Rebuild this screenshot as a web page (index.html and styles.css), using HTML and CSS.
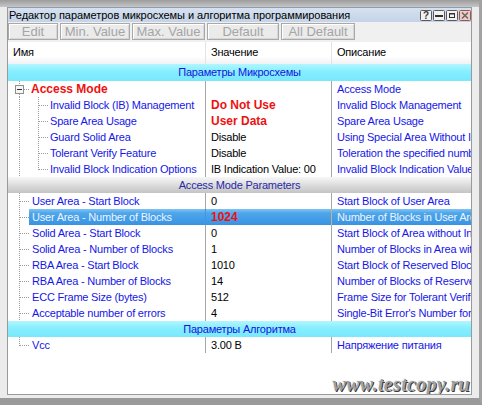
FILE: index.html
```html
<!DOCTYPE html>
<html>
<head>
<meta charset="utf-8">
<link rel="stylesheet" href="styles.css">
</head>
<body>
<div class="screen">
  <div class="topband"></div>
  <div class="mid">
    <div class="win">
      <div class="titlebar">
        <span class="title">Редактор параметров микросхемы и алгоритма программирования</span>
        <div class="tbtns">
          <svg width="12" height="11" viewBox="0 0 12 11"><rect x="0.5" y="0.5" width="11" height="10" rx="1" fill="#f2f2f2" stroke="#5a5a5a"/><text x="6" y="9" font-size="10" font-weight="bold" text-anchor="middle" fill="#3a3a3a" font-family="Liberation Sans, sans-serif">?</text></svg>
          <svg width="12" height="11" viewBox="0 0 12 11"><rect x="0.5" y="0.5" width="11" height="10" rx="1" fill="#f2f2f2" stroke="#5a5a5a"/><rect x="2" y="5" width="8" height="2" fill="#333"/></svg>
          <svg width="12" height="11" viewBox="0 0 12 11"><rect x="0.5" y="0.5" width="11" height="10" rx="1" fill="#f2f2f2" stroke="#5a5a5a"/><rect x="3.5" y="3.5" width="5" height="4" fill="none" stroke="#333"/><rect x="3" y="3" width="6" height="1.5" fill="#333"/></svg>
          <svg width="12" height="11" viewBox="0 0 12 11"><rect x="0.5" y="0.5" width="11" height="10" rx="1" fill="#ecd0c8" stroke="#a0524a"/><path d="M3 2.5L9 8.5M9 2.5L3 8.5" stroke="#6a6a6a" stroke-width="1.6"/></svg>
        </div>
      </div>
      <div class="toolbar">
        <button class="tb b-edit">Edit</button>
        <button class="tb b-min">Min. Value</button>
        <button class="tb b-max">Max. Value</button>
        <button class="tb b-def">Default</button>
        <button class="tb b-all">All Default</button>
      </div>
      <div class="list">
        <div class="hdr">
          <div class="h1">Имя</div>
          <div class="h2">Значение</div>
          <div class="h3">Описание</div>
        </div>
        <div class="grp cyan first">Параметры Микросхемы</div>

        <div class="row">
          <div class="c1"><svg class="tr" width="21" height="16"><path d="M11.5 0V4M11.5 13V16M16 8.5H21"/><rect class="box" x="7.5" y="4.5" width="8" height="8"/><path class="minus" d="M9 8.5H14"/></svg><span class="lbl am">Access Mode</span></div>
          <div class="c2"></div>
          <div class="c3">Access Mode</div>
        </div>

        <div class="row">
          <div class="c1"><svg class="tr" width="40" height="16"><path d="M11.5 0V16M30.5 0V16M31 8.5H40"/></svg><span class="lbl l2">Invalid Block (IB) Management</span></div>
          <div class="c2 red">Do Not Use</div>
          <div class="c3">Invalid Block Management</div>
        </div>
        <div class="row">
          <div class="c1"><svg class="tr" width="40" height="16"><path d="M11.5 0V16M30.5 0V16M31 8.5H40"/></svg><span class="lbl l2">Spare Area Usage</span></div>
          <div class="c2 red">User Data</div>
          <div class="c3">Spare Area Usage</div>
        </div>
        <div class="row">
          <div class="c1"><svg class="tr" width="40" height="16"><path d="M11.5 0V16M30.5 0V16M31 8.5H40"/></svg><span class="lbl l2">Guard Solid Area</span></div>
          <div class="c2">Disable</div>
          <div class="c3">Using Special Area Without Invalid Blocks</div>
        </div>
        <div class="row">
          <div class="c1"><svg class="tr" width="40" height="16"><path d="M11.5 0V16M30.5 0V16M31 8.5H40"/></svg><span class="lbl l2">Tolerant Verify Feature</span></div>
          <div class="c2">Disable</div>
          <div class="c3">Toleration the specified number of errors</div>
        </div>
        <div class="row">
          <div class="c1"><svg class="tr" width="40" height="16"><path d="M11.5 0V16M30.5 0V9M31 8.5H40"/></svg><span class="lbl l2">Invalid Block Indication Options</span></div>
          <div class="c2">IB Indication Value: 00</div>
          <div class="c3">Invalid Block Indication Value</div>
        </div>

        <div class="grp gray">Access Mode Parameters</div>

        <div class="row">
          <div class="c1"><svg class="tr" width="21" height="16"><path d="M11.5 0V16M12 8.5H21"/></svg><span class="lbl l1">User Area - Start Block</span></div>
          <div class="c2">0</div>
          <div class="c3">Start Block of User Area</div>
        </div>
        <div class="row sel">
          <div class="c1"><svg class="tr" width="21" height="16"><path d="M11.5 0V16M12 8.5H21"/></svg><span class="lbl l1">User Area - Number of Blocks</span></div>
          <div class="c2 red">1024</div>
          <div class="c3">Number of Blocks in User Area</div>
        </div>
        <div class="row">
          <div class="c1"><svg class="tr" width="21" height="16"><path d="M11.5 0V16M12 8.5H21"/></svg><span class="lbl l1">Solid Area - Start Block</span></div>
          <div class="c2">0</div>
          <div class="c3">Start Block of Area without Invalid Blocks</div>
        </div>
        <div class="row">
          <div class="c1"><svg class="tr" width="21" height="16"><path d="M11.5 0V16M12 8.5H21"/></svg><span class="lbl l1">Solid Area - Number of Blocks</span></div>
          <div class="c2">1</div>
          <div class="c3">Number of Blocks in Area without Invalid Blocks</div>
        </div>
        <div class="row">
          <div class="c1"><svg class="tr" width="21" height="16"><path d="M11.5 0V16M12 8.5H21"/></svg><span class="lbl l1">RBA Area - Start Block</span></div>
          <div class="c2">1010</div>
          <div class="c3">Start Block of Reserved Block Area</div>
        </div>
        <div class="row">
          <div class="c1"><svg class="tr" width="21" height="16"><path d="M11.5 0V16M12 8.5H21"/></svg><span class="lbl l1">RBA Area - Number of Blocks</span></div>
          <div class="c2">14</div>
          <div class="c3">Number of Blocks of Reserved Block Area</div>
        </div>
        <div class="row">
          <div class="c1"><svg class="tr" width="21" height="16"><path d="M11.5 0V16M12 8.5H21"/></svg><span class="lbl l1">ECC Frame Size (bytes)</span></div>
          <div class="c2">512</div>
          <div class="c3">Frame Size for Tolerant Verification</div>
        </div>
        <div class="row">
          <div class="c1"><svg class="tr" width="21" height="16"><path d="M11.5 0V16M12 8.5H21"/></svg><span class="lbl l1">Acceptable number of errors</span></div>
          <div class="c2">4</div>
          <div class="c3">Single-Bit Error's Number for Tolerant Verification</div>
        </div>

        <div class="grp cyan">Параметры Алгоритма</div>

        <div class="row">
          <div class="c1"><svg class="tr" width="21" height="16"><path d="M11.5 0V9M12 8.5H21"/></svg><span class="lbl l1">Vcc</span></div>
          <div class="c2">3.00 В</div>
          <div class="c3">Напряжение питания</div>
        </div>

        <div class="fill"></div>
        <div class="wm">www.testcopy.ru</div>
      </div>
    </div>
  </div>
</div>
</body>
</html>
```

FILE: styles.css
```css
* { box-sizing: border-box; }
body { margin: 0; font-family: "Liberation Sans", Arial, sans-serif; }

.screen {
  width: 482px; height: 405px;
  background: #ececec;
  border-right: 3px solid #a2a2a2;
  border-bottom: 7px solid #9a9a9a;
  display: flex; flex-direction: column;
  overflow: hidden;
}
.topband { flex: none; height: 7px; background: linear-gradient(#9c9c9c, #c6c6c6); }
.mid { flex: 1; display: flex; padding: 0 7px 3px 7px; }

.win {
  width: 465px; height: 388px;
  border: 1px solid #9a9a9a;
  border-top-color: #8e9bb0;
  display: flex; flex-direction: column;
  background: #fff;
}

.titlebar {
  flex: none; height: 14px;
  display: flex; align-items: center; justify-content: space-between;
  background: linear-gradient(#d6e1ef, #c4d3e7);
  padding-left: 1px;
}
.title { font-size: 11px; line-height: 14px; color: #000; white-space: nowrap; letter-spacing: -0.05px; }
.tbtns { display: flex; gap: 1px; align-items: center; height: 11px; }
.tbtns svg { display: block; }

.toolbar {
  flex: none; height: 20px;
  background: #f0f0f0;
  display: flex; gap: 2px;
  padding-top: 1px;
}
.tb {
  height: 17px; padding: 0; margin: 0;
  font-family: "Liberation Sans", Arial, sans-serif;
  font-size: 13px; line-height: 15px;
  color: #a5a5a5;
  background: #ebebeb;
  border: 1px solid #a9a9a9;
  box-shadow: inset 1px 1px 0 #fff, inset -1px -1px 0 #d6d6d6;
  text-align: center;
}
.b-edit { width: 50px; }
.b-min { width: 70px; }
.b-max { width: 73px; }
.b-def { width: 72px; }
.b-all { width: 74px; }

.list {
  flex: 1; position: relative;
  display: flex; flex-direction: column;
  font-size: 11px; letter-spacing: -0.2px;
  overflow: hidden;
}
.hdr {
  flex: none; height: 22px;
  display: grid; grid-template-columns: 198px 126px 1fr;
  background: linear-gradient(#ffffff 0, #ffffff 65%, #f1f2f4 100%);
  line-height: 21px; color: #000;
}
.h1, .h2 { border-right: 1px solid #e3e3e3; }
.h1 { padding-left: 5px; }
.h2, .h3 { padding-left: 5px; }

.grp {
  flex: none; height: 16px; line-height: 16px;
  text-align: center; white-space: nowrap;
}
.grp.first { height: 17px; line-height: 17px; }
.cyan { background: linear-gradient(#b2f6ff, #86eeff 45%, #78e8fc); color: #1414e0; }
.gray { background: linear-gradient(#f7f7f7, #dadada 55%, #c4c4c4); color: #2a2aa8; }

.row {
  flex: none; height: 16px; line-height: 16px;
  display: grid; grid-template-columns: 198px 126px 1fr;
  white-space: nowrap;
}
.c1 { display: flex; border-right: 1px solid #a7a7a7; overflow: hidden; color: #1616e8; }
.c2 { padding-left: 5px; border-right: 1px solid #a7a7a7; overflow: hidden; color: #000; }
.c3 { padding-left: 5px; overflow: hidden; color: #1616e8; }

.tr { display: block; flex: none; }
.tr path { fill: none; stroke: #9c9c9c; stroke-width: 1; stroke-dasharray: 1 1; shape-rendering: crispEdges; }
.tr .box { fill: #f6f6f6; stroke: #8e8e8e; shape-rendering: crispEdges; }
.tr .minus { stroke: #2a2a2a; stroke-dasharray: none; }

.lbl { flex: 1; }
.lbl.l1 { padding-left: 3px; }
.lbl.l2 { padding-left: 2px; }
.lbl.am { padding-left: 2px; color: #ee1111; font-weight: bold; font-size: 12px; letter-spacing: 0; }
.red { color: #ee1111; font-weight: bold; font-size: 12px; letter-spacing: 0; }

.sel .lbl { background: linear-gradient(#80c3f6, #4ea6ea 25%, #3993e2); color: #eef4ff; }
.sel .c1 { border-right-color: #3d97e4; }
.sel .c2 { background: linear-gradient(#80c3f6, #4ea6ea 25%, #3993e2); border-right-color: #c8b08c; }
.sel .c3 { background: linear-gradient(#80c3f6, #4ea6ea 25%, #3993e2); color: #eef4ff; }

.fill { flex: 1; }

.wm {
  position: absolute; right: 1px; bottom: -2px;
  font-family: "Liberation Serif", "Times New Roman", serif;
  font-style: italic; font-weight: bold;
  font-size: 20px; letter-spacing: 0.3px;
  color: #a0a0a0;
  text-shadow: 1px 1px 0 #3a3a3a, -1px -1px 0 #f4f4f4;
}
```
